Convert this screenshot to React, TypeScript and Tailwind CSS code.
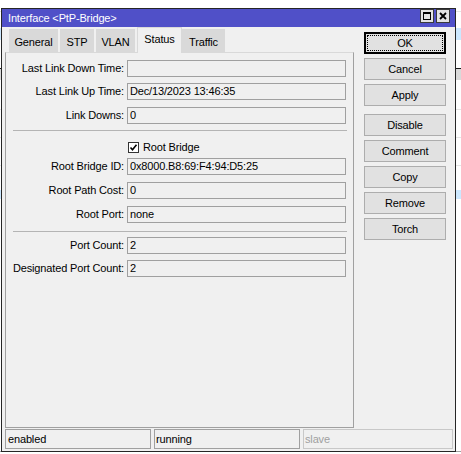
import React from "react"

const statusRows = [
  { label: "Last Link Down Time:", value: "", mt: "mt-0" },
  { label: "Last Link Up Time:", value: "Dec/13/2023 13:46:35", mt: "mt-[6px]" },
  { label: "Link Downs:", value: "0", mt: "mt-[7px]" },
]

const bridgeRows = [
  { label: "Root Bridge ID:", value: "0x8000.B8:69:F4:94:D5:25", mt: "mt-[5px]" },
  { label: "Root Path Cost:", value: "0", mt: "mt-[7px]" },
  { label: "Root Port:", value: "none", mt: "mt-[7px]" },
]

const portRows = [
  { label: "Port Count:", value: "2", mt: "mt-[5px]" },
  { label: "Designated Port Count:", value: "2", mt: "mt-[6px]" },
]

const tabs = [
  { name: "General", w: "w-[49px] ml-[4px]" },
  { name: "STP", w: "w-[34px] ml-[2px]" },
  { name: "VLAN", w: "w-[39px] ml-[2px]" },
  { name: "Status", w: "w-[45px] ml-[2px]", active: true },
  { name: "Traffic", w: "w-[43px]" },
]

function Field({ label, value, mt }: { label: string; value: string; mt: string }) {
  return (
    <div className={`flex items-center h-[17px] ${mt}`}>
      <span className="w-[118px] text-right whitespace-nowrap leading-[17px]">{label}</span>
      <div className="ml-[3px] w-[219px] h-[17px] border border-[#a0a0a0] bg-[#f0f0f0] px-[2px] leading-[15px] whitespace-nowrap">
        {value}
      </div>
    </div>
  )
}

function Button({ label, focused, mt }: { label: string; focused?: boolean; mt: string }) {
  return (
    <button
      className={`${mt} h-[22px] w-[82px] bg-[#e1e1e1] text-[11px] leading-none text-black ${
        focused
          ? "border-2 border-black outline-1 outline-dotted outline-black -outline-offset-4"
          : "border border-[#adadad]"
      }`}
    >
      {label}
    </button>
  )
}

export default function App() {
  return (
    <div className="relative w-[461px] h-[454px] overflow-hidden bg-white font-['Liberation_Sans',Arial,sans-serif] text-[11px] tracking-[-0.15px] text-black">
      {/* list of the main window, behind the dialog */}
      <div className="flex flex-col w-full">
        <div className="h-[11px]" />
        <div className="h-px bg-[#e5e5e5]" />
        <div className="h-[16px]" />
        <div className="h-[12px] bg-[#cce8ff]" />
        <div className="h-[28px]" />
        <div className="h-px bg-[#1a1a1a]" />
        <div className="h-[11px] bg-[#d9d9d9]" />
        <div className="h-[29px]" />
        <div className="h-px bg-[#e5e5e5]" />
        <div className="h-[27px]" />
        <div className="h-px bg-[#e5e5e5]" />
        <div className="h-[27px]" />
        <div className="h-px bg-[#e5e5e5]" />
        <div className="h-[24px]" />
        <div className="h-[9px] bg-[#cce8ff]" />
        <div className="h-[252px]" />
        <div className="h-px bg-[#a0a0a0]" />
      </div>

      {/* dialog window */}
      <div className="absolute left-[1px] top-[8px] w-[455px] h-[444px] flex flex-col border border-[#262626] bg-[#f0f0f0]">
        <div className="h-[18px] flex items-start bg-[#5050c8] pl-[6px] pr-[5px]">
          <span className="text-white leading-[18px] whitespace-nowrap">Interface &lt;PtP-Bridge&gt;</span>
          <div className="ml-auto flex gap-[2px]">
            <div className="w-[14px] h-[14px] border border-[#3a3a3a] bg-[#e3e3e3] flex items-center justify-center">
              <div className="w-[8px] h-[8px] border border-black border-t-2" />
            </div>
            <div className="w-[14px] h-[14px] border border-[#3a3a3a] bg-[#e3e3e3] flex items-center justify-center">
              <svg width="8" height="8" viewBox="0 0 8 8">
                <path d="M1 1 L7 7 M7 1 L1 7" stroke="black" strokeWidth="1.8" />
              </svg>
            </div>
          </div>
        </div>

        <div className="flex h-[401px] pl-[3px]">
          <div className="w-[349px] flex flex-col">
            <div className="relative z-10 h-[26px] -mb-px flex items-end">
              {tabs.map((t) =>
                t.active ? (
                  <div
                    key={t.name}
                    className={`${t.w} h-[26px] bg-[#f0f0f0] border border-b-0 border-[#d9d9d9] text-center pt-[4px] leading-[14px]`}
                  >
                    {t.name}
                  </div>
                ) : (
                  <div
                    key={t.name}
                    className={`${t.w} h-[23px] mb-px bg-[#d9d9d9] text-center pt-[6px] leading-[14px]`}
                  >
                    {t.name}
                  </div>
                )
              )}
            </div>
            <div className="h-[376px] border border-[#a0a0a0] border-t-[#d9d9d9] flex flex-col pt-[7px]">
              {statusRows.map((r) => (
                <Field key={r.label} {...r} />
              ))}
              <div className="mt-[6px] ml-[7px] mr-[6px] h-px bg-[#b4b4b4]" />
              <div className="mt-[11px] h-[11px] flex items-center pl-[122px]">
                <div className="w-[11px] h-[11px] border border-[#333333] bg-white flex items-center justify-center">
                  <svg width="9" height="9" viewBox="0 0 9 9">
                    <path d="M1.5 4.5 L3.5 6.8 L7.5 1.8" fill="none" stroke="black" strokeWidth="1.6" />
                  </svg>
                </div>
                <span className="ml-[4px] leading-[11px]">Root Bridge</span>
              </div>
              {bridgeRows.map((r) => (
                <Field key={r.label} {...r} />
              ))}
              <div className="mt-[8px] ml-[7px] mr-[6px] h-px bg-[#b4b4b4]" />
              {portRows.map((r) => (
                <Field key={r.label} {...r} />
              ))}
            </div>
          </div>

          <div className="ml-[10px] pt-[5px] flex flex-col">
            <Button label="OK" focused mt="mt-0" />
            <Button label="Cancel" mt="mt-[4px]" />
            <Button label="Apply" mt="mt-[4px]" />
            <Button label="Disable" mt="mt-[8px]" />
            <Button label="Comment" mt="mt-[4px]" />
            <Button label="Copy" mt="mt-[4px]" />
            <Button label="Remove" mt="mt-[4px]" />
            <Button label="Torch" mt="mt-[4px]" />
          </div>
        </div>

        <div className="mt-px h-[20px] flex gap-[3px] pl-[3px]">
          <div className="w-[146px] border border-[#a0a0a0] pl-[2px] leading-[18px]">enabled</div>
          <div className="w-[146px] border border-[#a0a0a0] pl-[1px] leading-[18px]">running</div>
          <div className="w-[150px] border border-[#c8c8c8] pl-[1px] leading-[18px] text-[#a0a0a0]">slave</div>
        </div>
      </div>
    </div>
  )
}
